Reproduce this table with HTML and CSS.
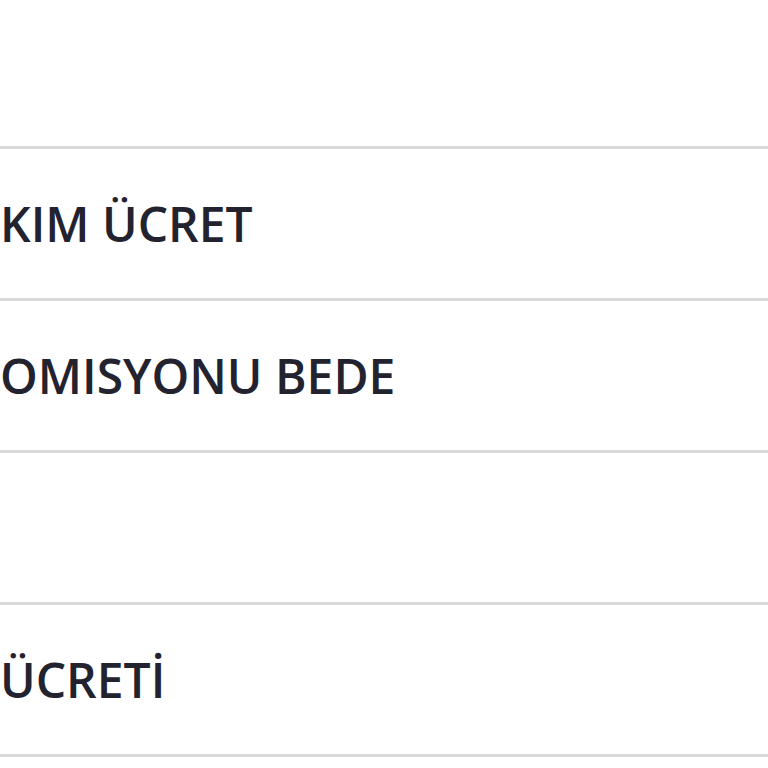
FILE: index.html
```html
<!DOCTYPE html>
<html lang="tr">
<head>
<meta charset="utf-8">
<title>Ücretler</title>
<link rel="stylesheet" href="styles.css">
</head>
<body>
<div class="table">
  <div class="row head"></div>
  <div class="row"><span class="cell">KIM ÜCRET</span></div>
  <div class="row"><span class="cell">OMISYONU BEDE</span></div>
  <div class="row"></div>
  <div class="row"><span class="cell">ÜCRETİ</span></div>
  <div class="row tail"></div>
</div>
</body>
</html>
```
FILE: styles.css
```css
html, body {
  margin: 0;
  padding: 0;
  background: #ffffff;
  overflow: hidden;
}
.table {
  width: 768px;
  height: 768px;
  display: flex;
  flex-direction: column;
  overflow: hidden;
}
.row {
  box-sizing: border-box;
  flex: none;
  height: 152px;
  border-top: 3px solid #d9d9d9;
  display: flex;
  align-items: center;
  font-family: "Open Sans", "Noto Sans", sans-serif;
  font-size: 48px;
  font-weight: 600;
  color: #23232f;
  letter-spacing: 0;
}
.row.head {
  height: 146px;
  border-top: none;
}
.row.tail {
  height: 14px;
}
.cell {
  white-space: nowrap;
}
```
